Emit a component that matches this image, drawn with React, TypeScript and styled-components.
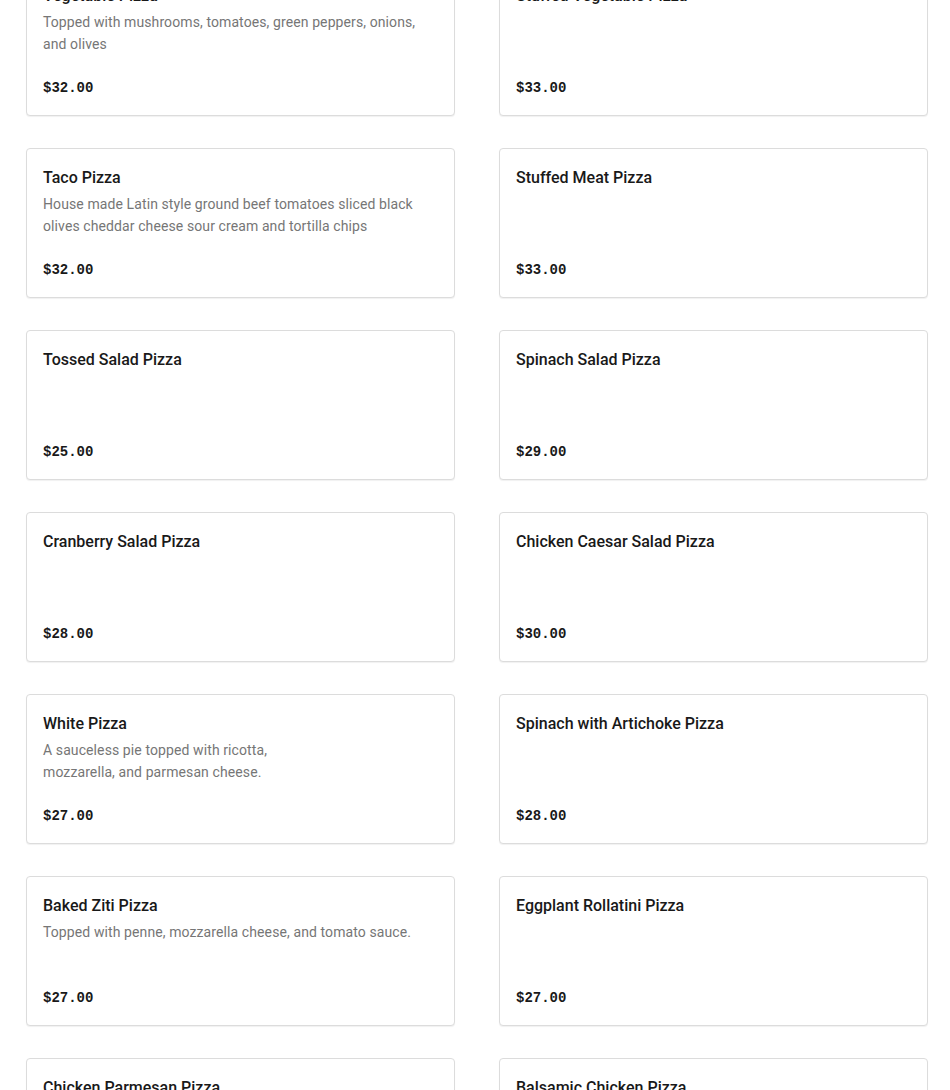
import styled, { createGlobalStyle } from 'styled-components';

const GlobalStyle = createGlobalStyle`
  html, body {
    margin: 0;
    padding: 0;
    background: #ffffff;
    font-family: Roboto, "Liberation Sans", sans-serif;
    color: #191919;
  }
`;

type Item = { name: string; desc?: string[]; price: string };

const items: Item[] = [
  { name: 'Vegetable Pizza', desc: ['Topped with mushrooms, tomatoes, green peppers, onions, and olives'], price: '$32.00' },
  { name: 'Stuffed Vegetable Pizza', price: '$33.00' },
  { name: 'Taco Pizza', desc: ['House made Latin style ground beef tomatoes sliced black olives cheddar cheese sour cream and tortilla chips'], price: '$32.00' },
  { name: 'Stuffed Meat Pizza', price: '$33.00' },
  { name: 'Tossed Salad Pizza', price: '$25.00' },
  { name: 'Spinach Salad Pizza', price: '$29.00' },
  { name: 'Cranberry Salad Pizza', price: '$28.00' },
  { name: 'Chicken Caesar Salad Pizza', price: '$30.00' },
  { name: 'White Pizza', desc: ['A sauceless pie topped with ricotta,', 'mozzarella, and parmesan cheese.'], price: '$27.00' },
  { name: 'Spinach with Artichoke Pizza', price: '$28.00' },
  { name: 'Baked Ziti Pizza', desc: ['Topped with penne, mozzarella cheese, and tomato sauce.'], price: '$27.00' },
  { name: 'Eggplant Rollatini Pizza', price: '$27.00' },
  { name: 'Chicken Parmesan Pizza', price: '$28.00' },
  { name: 'Balsamic Chicken Pizza', price: '$28.00' },
];

const Menu = styled.div`
  display: grid;
  grid-template-columns: 1fr 1fr;
  column-gap: 44px;
  row-gap: 32px;
  padding: 0 22px 40px 26px;
  margin-top: -34px;
`;

const Card = styled.div`
  display: flex;
  flex-direction: column;
  box-sizing: border-box;
  height: 150px;
  padding: 17px 16px 17px;
  border: 1px solid #dcdcdc;
  border-radius: 4px;
  box-shadow: 0 1px 1px rgba(0, 0, 0, 0.06);
  background: #fff;
`;

const Title = styled.div`
  font-size: 16px;
  line-height: 24px;
  font-weight: 500;
  color: #191919;
`;

const Desc = styled.div`
  margin-top: 3px;
  font-size: 14px;
  line-height: 22px;
  letter-spacing: 0.1px;
  color: #767676;
`;

const Price = styled.div`
  margin-top: auto;
  font-family: "Liberation Mono", "DejaVu Sans Mono", monospace;
  font-weight: 700;
  font-size: 14px;
  line-height: 20px;
  color: #191919;
`;

export default function App() {
  return (
    <>
      <GlobalStyle />
      <Menu>
        {items.map((it) => (
          <Card key={it.name}>
            <Title>{it.name}</Title>
            {it.desc && (
              <Desc>
                {it.desc.map((line, i) => (
                  <span key={i}>
                    {i > 0 && <br />}
                    {line}
                  </span>
                ))}
              </Desc>
            )}
            <Price>{it.price}</Price>
          </Card>
        ))}
      </Menu>
    </>
  );
}
